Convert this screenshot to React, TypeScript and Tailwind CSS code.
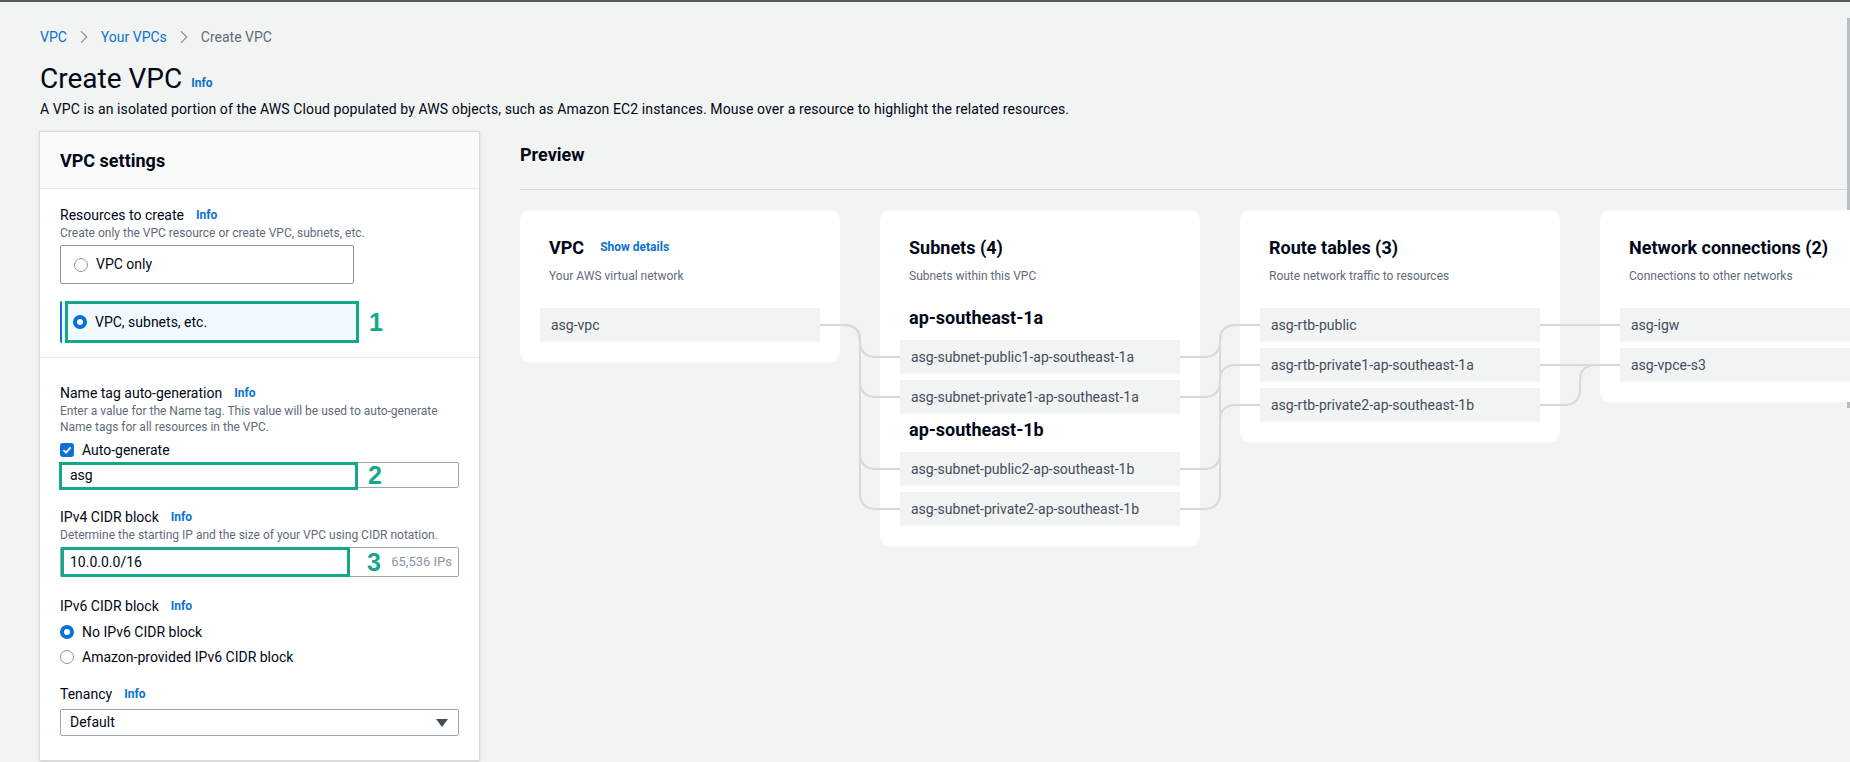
import { ChevronRight } from 'lucide-react';

// connector between two boxes: horizontal, bend at xm, vertical, bend, horizontal
const link = (x1: number, y1: number, xm: number, x2: number, y2: number) => {
  const r = 16;
  if (y1 === y2) return `M ${x1} ${y1} H ${x2}`;
  const d = y2 > y1 ? 1 : -1;
  return `M ${x1} ${y1} H ${xm - r} Q ${xm} ${y1} ${xm} ${y1 + d * r} V ${y2 - d * r} Q ${xm} ${y2} ${xm + r} ${y2} H ${x2}`;
};

const paths = [
  // vpc -> subnets
  link(300, 115, 340, 380, 147),
  link(300, 115, 340, 380, 187),
  link(300, 115, 340, 380, 259),
  link(300, 115, 340, 380, 299),
  // subnets -> route tables
  link(660, 147, 700, 740, 115),
  link(660, 187, 700, 740, 155),
  link(660, 259, 700, 740, 115),
  link(660, 299, 700, 740, 195),
  // route tables -> network connections
  link(1020, 115, 1060, 1100, 115),
  link(1020, 155, 1060, 1100, 155),
  link(1020, 195, 1060, 1100, 155),
];

const Info = () => <span className="text-[12px] font-bold text-[#0972d3]">Info</span>;

const Radio = ({ on }: { on?: boolean }) =>
  on ? (
    <span className="w-[14px] h-[14px] rounded-full border-[4px] border-[#0972d3] bg-white shrink-0" />
  ) : (
    <span className="w-[14px] h-[14px] rounded-full border-[1.5px] border-[#8c96a3] bg-white shrink-0" />
  );

const Item = ({ text }: { text: string }) => (
  <div className="h-[34px] w-[280px] bg-[#f2f3f3] flex items-center px-[11px] text-[14px] text-[#414d5c] whitespace-nowrap">
    {text}
  </div>
);

const CardHead = ({ title, sub, link }: { title: string; sub: string; link?: string }) => (
  <div className="px-[9px]">
    <div className="h-[24px] flex items-center gap-4">
      <span className="text-[18px] font-bold text-[#000716] whitespace-nowrap">{title}</span>
      {link && <span className="text-[12px] font-bold text-[#0972d3]">{link}</span>}
    </div>
    <div className="mt-[9px] h-[16px] leading-4 text-[12px] text-[#5f6b7a] whitespace-nowrap">{sub}</div>
  </div>
);

export default function App() {
  return (
    <div className="relative w-[1850px] h-[762px] overflow-hidden bg-[#f2f3f3] font-[Roboto,'Liberation_Sans',sans-serif] text-[#000716]">
      <div className="h-[2px] bg-[#545b64]" />

      {/* page scrollbar */}
      <div className="absolute right-0 top-[18px] w-[3px] h-[390px] bg-[#b9bec4]" />

      <div className="pl-[40px]">
        {/* breadcrumb */}
        <div className="mt-[25px] h-[20px] flex items-center gap-[6px] text-[14px]">
          <span className="text-[#0972d3]">VPC</span>
          <ChevronRight size={22} strokeWidth={1.2} className="text-[#8c96a3]" />
          <span className="text-[#0972d3]">Your VPCs</span>
          <ChevronRight size={22} strokeWidth={1.2} className="text-[#8c96a3]" />
          <span className="text-[#5f6b7a]">Create VPC</span>
        </div>

        <div className="mt-[14px] h-[36px] flex items-end gap-[9px]">
          <h1 className="text-[28px] leading-[36px] font-normal">Create VPC</h1>
          <span className="mb-[3px]"><Info /></span>
        </div>
        <p className="mt-[2px] text-[14px] leading-5 tracking-[0.1px]">
          A VPC is an isolated portion of the AWS Cloud populated by AWS objects, such as Amazon EC2 instances. Mouse over a resource to highlight the related resources.
        </p>

        <div className="mt-[12px] flex gap-[40px]">
          {/* VPC settings panel */}
          <div className="w-[441px] h-[630px] shrink-0 -ml-px bg-white border border-[#d5dbdb] shadow-sm">
            <div className="h-[57px] bg-[#fafafa] border-b border-[#e9ebed] flex items-center px-[20px]">
              <h2 className="text-[18px] font-bold">VPC settings</h2>
            </div>

            <div className="px-[20px] pt-[16px] pb-[14px] border-b border-[#e9ebed]">
              <div className="h-[20px] flex items-center gap-[12px] text-[14px]">
                Resources to create <Info />
              </div>
              <div className="h-[16px] leading-4 text-[12px] text-[#5f6b7a]">
                Create only the VPC resource or create VPC, subnets, etc.
              </div>
              <div className="mt-[4px] w-[294px] h-[39px] border border-[#8c96a3] rounded-[2px] flex items-center gap-[8px] pl-[13px] text-[14px]">
                <Radio /> VPC only
              </div>
              <div className="relative mt-[17px] w-[297px] h-[42px] bg-[#f1faff] border-l-2 border-[#0972d3] rounded-[2px] flex items-center gap-[8px] pl-[11px] text-[14px]">
                <Radio on /> VPC, subnets, etc.
                <div className="absolute left-[3px] top-0 w-[294px] h-[42px] border-[3px] border-[#14a88a]" />
                <span className="absolute left-[307px] top-[7px] font-['Liberation_Sans',sans-serif] text-[25px] leading-[28px] font-bold text-[#14a88a]">1</span>
              </div>
            </div>

            <div className="px-[20px] pt-[25px]">
              <div className="h-[20px] flex items-center gap-[12px] text-[14px]">
                Name tag auto-generation <Info />
              </div>
              <div className="leading-4 text-[12px] text-[#5f6b7a]">
                Enter a value for the Name tag. This value will be used to auto-generate Name tags for all resources in the VPC.
              </div>
              <div className="mt-[5px] h-[20px] flex items-center gap-[8px] text-[14px]">
                <span className="w-[14px] h-[14px] rounded-[3px] bg-[#0972d3] flex items-center justify-center">
                  <svg width="10" height="10" viewBox="0 0 10 10">
                    <path d="M1.5 5.2 L4 7.6 L8.6 2.4" fill="none" stroke="white" strokeWidth="1.8" />
                  </svg>
                </span>
                Auto-generate
              </div>
              <div className="relative mt-[2px] h-[26px] border border-[#9ba7b6] rounded-[2px] flex items-center pl-[9px] text-[14px]">
                asg
                <div className="absolute left-[-2px] top-[-1px] w-[299px] h-[28px] border-[3px] border-[#14a88a]" />
                <span className="absolute left-[307px] top-[-2px] font-['Liberation_Sans',sans-serif] text-[25px] leading-[28px] font-bold text-[#14a88a]">2</span>
              </div>

              <div className="mt-[19px] h-[20px] flex items-center gap-[12px] text-[14px]">
                IPv4 CIDR block <Info />
              </div>
              <div className="h-[16px] leading-4 text-[12px] text-[#5f6b7a]">
                Determine the starting IP and the size of your VPC using CIDR notation.
              </div>
              <div className="relative mt-[4px] h-[30px] border border-[#9ba7b6] rounded-[2px] flex items-center justify-between pl-[9px] pr-[6px] text-[14px]">
                <span>10.0.0.0/16</span>
                <span className="text-[13px] text-[#8c96a3]">65,536 IPs</span>
                <div className="absolute left-[0px] top-[-1px] w-[289px] h-[30px] border-[3px] border-[#14a88a]" />
                <span className="absolute left-[306px] top-[0px] font-['Liberation_Sans',sans-serif] text-[25px] leading-[28px] font-bold text-[#14a88a]">3</span>
              </div>

              <div className="mt-[19px] h-[20px] flex items-center gap-[12px] text-[14px]">
                IPv6 CIDR block <Info />
              </div>
              <div className="mt-[6px] h-[20px] flex items-center gap-[8px] text-[14px]">
                <Radio on /> No IPv6 CIDR block
              </div>
              <div className="mt-[5px] h-[20px] flex items-center gap-[8px] text-[14px]">
                <Radio /> Amazon-provided IPv6 CIDR block
              </div>

              <div className="mt-[17px] h-[20px] flex items-center gap-[12px] text-[14px]">
                Tenancy <Info />
              </div>
              <div className="mt-[5px] h-[27px] border border-[#9ba7b6] rounded-[2px] flex items-center justify-between pl-[9px] pr-[10px] text-[14px]">
                Default
                <svg width="12" height="8" viewBox="0 0 12 8">
                  <polygon points="0,0 12,0 6,8" fill="#414d5c" />
                </svg>
              </div>
            </div>
          </div>

          {/* Preview */}
          <div className="flex-1 min-w-0 overflow-hidden">
            <div className="pt-[12px] h-[59px] border-b border-[#d5dbdb]">
              <h2 className="text-[18px] leading-6 font-bold">Preview</h2>
            </div>

            <div className="relative mt-[20px] w-[1400px] flex items-start gap-[40px]">
              <div className="w-[320px] shrink-0 bg-white rounded-[10px] px-[20px] pt-[25px] pb-[20px]">
                <CardHead title="VPC" sub="Your AWS virtual network" link="Show details" />
                <div className="mt-[24px]">
                  <Item text="asg-vpc" />
                </div>
              </div>

              <div className="w-[320px] shrink-0 bg-white rounded-[10px] px-[20px] pt-[25px] pb-[20px]">
                <CardHead title="Subnets (4)" sub="Subnets within this VPC" />
                <div className="mt-[21px] px-[9px] h-[24px] flex items-center text-[18px] font-bold">ap-southeast-1a</div>
                <div className="mt-[11px] flex flex-col gap-[6px]">
                  <Item text="asg-subnet-public1-ap-southeast-1a" />
                  <Item text="asg-subnet-private1-ap-southeast-1a" />
                </div>
                <div className="mt-[3px] px-[9px] h-[24px] flex items-center text-[18px] font-bold">ap-southeast-1b</div>
                <div className="mt-[11px] flex flex-col gap-[6px]">
                  <Item text="asg-subnet-public2-ap-southeast-1b" />
                  <Item text="asg-subnet-private2-ap-southeast-1b" />
                </div>
              </div>

              <div className="w-[320px] shrink-0 bg-white rounded-[10px] px-[20px] pt-[25px] pb-[20px]">
                <CardHead title="Route tables (3)" sub="Route network traffic to resources" />
                <div className="mt-[24px] flex flex-col gap-[6px]">
                  <Item text="asg-rtb-public" />
                  <Item text="asg-rtb-private1-ap-southeast-1a" />
                  <Item text="asg-rtb-private2-ap-southeast-1b" />
                </div>
              </div>

              <div className="w-[320px] shrink-0 bg-white rounded-[10px] px-[20px] pt-[25px] pb-[20px]">
                <CardHead title="Network connections (2)" sub="Connections to other networks" />
                <div className="mt-[24px] flex flex-col gap-[6px]">
                  <Item text="asg-igw" />
                  <Item text="asg-vpce-s3" />
                </div>
              </div>

              <svg className="absolute left-0 top-0 pointer-events-none" width="1400" height="340">
                {paths.map((d, i) => (
                  <path key={i} d={d} fill="none" stroke="#d5dbdb" strokeWidth="2" />
                ))}
              </svg>
            </div>
          </div>
        </div>
      </div>
    </div>
  );
}
